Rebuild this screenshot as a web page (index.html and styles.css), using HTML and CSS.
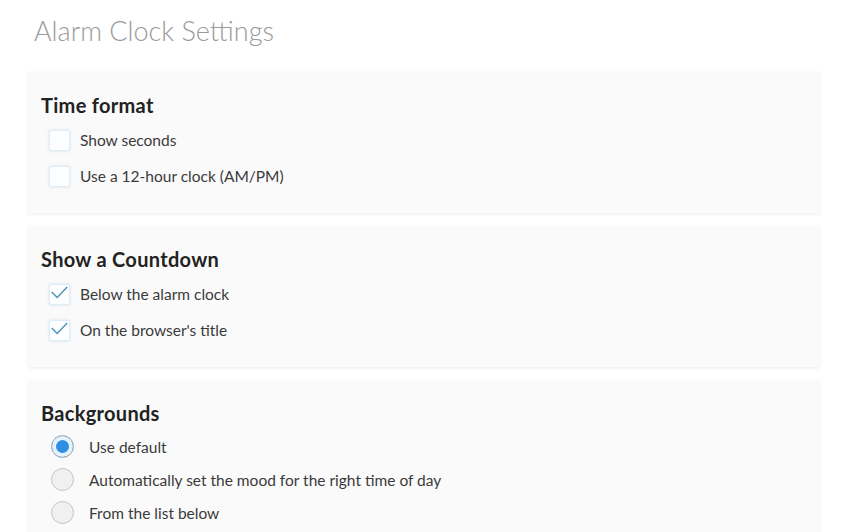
FILE: index.html
```html
<!DOCTYPE html>
<html lang="en">
  <head>
    <meta charset="UTF-8" />
    <meta name="viewport" content="width=device-width, initial-scale=1.0" />
    <title>Alarm Clock Settings</title>
    <link rel="stylesheet" href="styles.css">
  </head>
  <body>
    <h1 class="page-title">Alarm Clock Settings</h1>

    <div class="card">
      <h2>Time format</h2>
      <label class="check-row">
        <span class="check-box"></span>
        <span>Show seconds</span>
      </label>
      <label class="check-row">
        <span class="check-box"></span>
        <span>Use a 12-hour clock (AM/PM)</span>
      </label>
    </div>

    <div class="card">
      <h2>Show a Countdown</h2>
      <label class="check-row">
        <span class="check-box checked">
          <svg viewBox="0 0 22 22"><path d="M3 10.5 L9 16.5 L20 5" /></svg>
        </span>
        <span>Below the alarm clock</span>
      </label>
      <label class="check-row">
        <span class="check-box checked">
          <svg viewBox="0 0 22 22"><path d="M3 10.5 L9 16.5 L20 5" /></svg>
        </span>
        <span>On the browser's title</span>
      </label>
    </div>

    <div class="card card-last">
      <h2>Backgrounds</h2>
      <label class="radio-row">
        <span class="radio checked"></span>
        <span>Use default</span>
      </label>
      <label class="radio-row">
        <span class="radio"></span>
        <span>Automatically set the mood for the right time of day</span>
      </label>
      <label class="radio-row">
        <span class="radio"></span>
        <span>From the list below</span>
      </label>
    </div>
  </body>
</html>
```

FILE: styles.css
```css
* {
  margin: 0;
  padding: 0;
  box-sizing: border-box;
  font-family: "Lato", "Noto Sans", sans-serif;
}

body {
  background: #ffffff;
  color: #3a3a3a;
  padding: 0 28px;
  overflow: hidden;
}

.page-title {
  font-size: 27px;
  font-weight: 300;
  color: #9a9a9a;
  padding: 14px 0 0 6px;
  height: 72px;
}

.card {
  background: #fafafa;
  box-shadow: 0 1px 3px rgba(0, 0, 0, 0.08);
  padding: 22px 13px 0;
  min-height: 141px;
  margin-bottom: 13px;
  display: flex;
  flex-direction: column;
}

.card-last {
  min-height: 200px;
}

.card h2 {
  font-size: 20px;
  font-weight: 700;
  letter-spacing: 0.3px;
  color: #222222;
  line-height: 22px;
  margin-bottom: 6px;
}

.check-row {
  display: flex;
  flex-shrink: 0;
  align-items: center;
  gap: 10px;
  height: 36px;
  font-size: 15.5px;
  padding-left: 8px;
}

.check-box {
  width: 21px;
  height: 21px;
  background: #fcfeff;
  border: 1px solid #e0edf4;
  border-radius: 2px;
  box-shadow: 0 0 3px rgba(120, 170, 200, 0.3);
  display: flex;
}

.check-box svg {
  width: 21px;
  height: 21px;
  margin: -3px 0 0 -1px;
  fill: none;
  stroke: #4f93b3;
  stroke-width: 1.6;
}

.radio-row {
  display: flex;
  flex-shrink: 0;
  align-items: center;
  gap: 15px;
  height: 33px;
  font-size: 15.5px;
  padding-left: 10px;
}

.radio {
  width: 23px;
  height: 23px;
  border-radius: 50%;
  background: #f0f0f0;
  border: 1.5px solid #c4c4c4;
}

.radio.checked {
  background: #2f8fe3;
  border: 1.5px solid #b8b8b8;
  box-shadow: inset 0 0 0 4px #e6f2fc;
}
```
